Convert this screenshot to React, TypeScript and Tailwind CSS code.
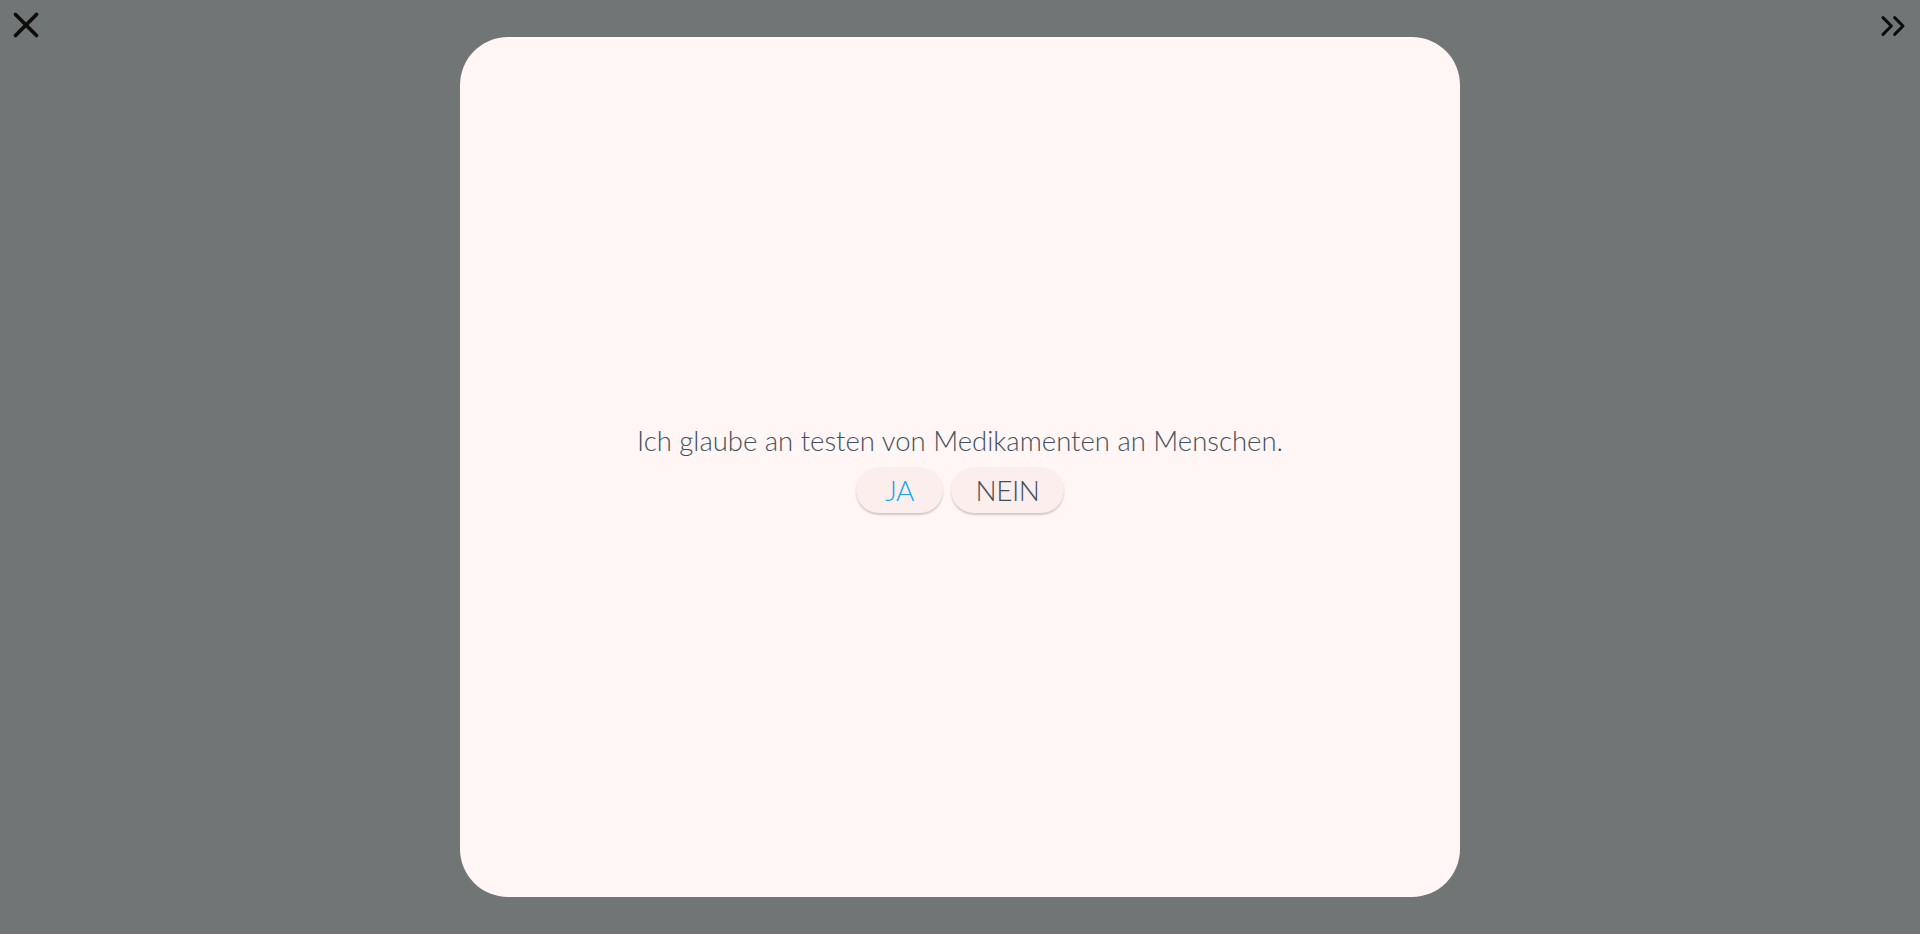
import { X, ChevronsRight } from 'lucide-react';

export default function App() {
  const answers = [
    { label: "JA", color: "text-[#0fa8f0] w-[87px]" },
    { label: "NEIN", color: "text-[#3f525c] w-[113px]" }
  ];

  return (
    <div className="relative h-[934px] w-full overflow-hidden bg-[#717575] font-['Lato',sans-serif]">
      {/* Top controls */}
      <button className="absolute left-[5px] top-[4px] text-[#0c0c0c]">
        <X className="h-[42px] w-[42px]" strokeWidth={2.1} />
      </button>
      <button className="absolute right-[7px] top-[6px] text-[#0c0c0c]">
        <ChevronsRight className="h-[40px] w-[40px]" strokeWidth={1.8} />
      </button>

      {/* Question card */}
      <div className="flex h-full items-center justify-center">
        <div className="flex h-[860px] w-[1000px] flex-col items-center justify-center rounded-[48px] bg-[#fff6f5]">
          <p className="text-[27.5px] font-light leading-[40px] text-[#3f525c]">
            Ich glaube an testen von Medikamenten an Menschen.
          </p>
          <div className="mt-[6px] flex gap-2">
            {answers.map((answer) => (
              <button
                key={answer.label}
                className={`h-[46px] rounded-full bg-[#fdeeee] text-[28px] font-light tracking-[-0.5px] shadow-[0_2px_2px_rgba(0,0,0,0.18)] ${answer.color}`}
              >
                {answer.label}
              </button>
            ))}
          </div>
        </div>
      </div>
    </div>
  );
}
